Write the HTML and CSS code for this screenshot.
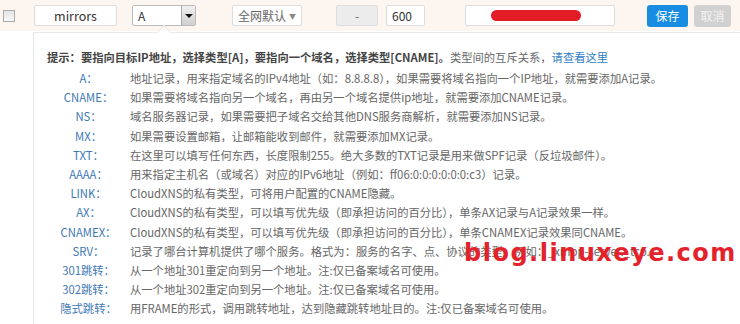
FILE: index.html
```html
<!DOCTYPE html>
<html lang="zh-CN">
<head>
  <meta charset="UTF-8" />
  <title>DNS Record</title>
  <link rel="stylesheet" href="styles.css">
</head>
<body>

<!-- record edit row -->
<div class="record-row">
  <span class="chk"></span>
  <div class="field host">mirrors</div>
  <div class="field type-select">
    <span>A</span>
    <span class="sel-arrow"></span>
  </div>
  <div class="field line-btn">全网默认 <span class="caret">▼</span></div>
  <div class="field mx">-</div>
  <div class="field ttl">600</div>
  <div class="field value"><span class="blot"></span></div>
  <button class="btn btn-save">保存</button>
  <button class="btn btn-cancel">取消</button>
</div>

<!-- type help popup -->
<div class="help-pop">
  <span class="pop-arrow"></span>
  <p class="tip"><strong>提示：要指向目标IP地址，选择类型[A]，要指向一个域名，选择类型[CNAME]。</strong>类型间的互斥关系，<a href="#">请查看这里</a></p>
  <div class="type-list">
    <span class="t">A：</span><span class="d">地址记录，用来指定域名的IPv4地址（如：8.8.8.8），如果需要将域名指向一个IP地址，就需要添加A记录。</span>
    <span class="t">CNAME：</span><span class="d">如果需要将域名指向另一个域名，再由另一个域名提供ip地址，就需要添加CNAME记录。</span>
    <span class="t">NS：</span><span class="d">域名服务器记录，如果需要把子域名交给其他DNS服务商解析，就需要添加NS记录。</span>
    <span class="t">MX：</span><span class="d">如果需要设置邮箱，让邮箱能收到邮件，就需要添加MX记录。</span>
    <span class="t">TXT：</span><span class="d">在这里可以填写任何东西，长度限制255。绝大多数的TXT记录是用来做SPF记录（反垃圾邮件）。</span>
    <span class="t">AAAA：</span><span class="d">用来指定主机名（或域名）对应的IPv6地址（例如：ff06:0:0:0:0:0:0:c3）记录。</span>
    <span class="t">LINK：</span><span class="d">CloudXNS的私有类型，可将用户配置的CNAME隐藏。</span>
    <span class="t">AX：</span><span class="d">CloudXNS的私有类型，可以填写优先级（即承担访问的百分比），单条AX记录与A记录效果一样。</span>
    <span class="t">CNAMEX：</span><span class="d">CloudXNS的私有类型，可以填写优先级（即承担访问的百分比），单条CNAMEX记录效果同CNAME。</span>
    <span class="t">SRV：</span><span class="d">记录了哪台计算机提供了哪个服务。格式为：服务的名字、点、协议的类型，例如：_xmpp-server._tcp.</span>
    <span class="t">301跳转：</span><span class="d">从一个地址301重定向到另一个地址。注:仅已备案域名可使用。</span>
    <span class="t">302跳转：</span><span class="d">从一个地址302重定向到另一个地址。注:仅已备案域名可使用。</span>
    <span class="t">隐式跳转：</span><span class="d">用FRAME的形式，调用跳转地址，达到隐藏跳转地址目的。注:仅已备案域名可使用。</span>
  </div>
</div>

<div class="watermark">blog.linuxeye.com</div>

</body>
</html>
```

FILE: styles.css
```css
body {
  margin: 0;
  background: #fff;
  font-family: "Noto Sans CJK SC", "Noto Sans", sans-serif;
  font-size: 12px;
  color: #555;
  overflow: hidden;
}
.record-row {
  display: flex;
  align-items: center;
  height: 31px;
  padding-left: 3px;
  background: #fdf6f0;
}
.chk {
  width: 10px;
  height: 10px;
  border: 1px solid #aaa;
  background: linear-gradient(#e6e6e6, #f6f6f6);
}
.field {
  box-sizing: border-box;
  height: 21px;
  border: 1px solid #ddd;
  border-radius: 2px;
  background: #fff;
  display: flex;
  align-items: center;
  color: #333;
}
.host {
  width: 83px;
  margin-left: 19px;
  justify-content: center;
  font-size: 12.5px;
}
.type-select {
  width: 64px;
  margin-left: 15px;
  padding-left: 5px;
  justify-content: space-between;
  border-color: #bbb;
}
.sel-arrow {
  position: relative;
  width: 14px;
  height: 19px;
  box-sizing: border-box;
  border-left: 1px solid #aaa;
  background: linear-gradient(#f0f0f0, #cfcfcf);
}
.sel-arrow::after {
  content: "";
  position: absolute;
  left: 3px;
  top: 8px;
  border-left: 4px solid transparent;
  border-right: 4px solid transparent;
  border-top: 4px solid #111;
}
.line-btn {
  width: 70px;
  margin-left: 36px;
  justify-content: center;
  color: #666;
}
.caret {
  font-size: 7px;
  color: #888;
  margin-left: 3px;
}
.mx {
  width: 42px;
  margin-left: 34px;
  justify-content: center;
  background: #ececec;
  color: #666;
}
.ttl {
  width: 39px;
  margin-left: 8px;
  padding-left: 5px;
}
.value {
  width: 150px;
  margin-left: 40px;
  padding-left: 25px;
}
.blot {
  width: 90px;
  height: 11px;
  border-radius: 6px;
  background: #e31d25;
}
.btn {
  height: 22px;
  border: none;
  border-radius: 3px;
  color: #fff;
  font-family: inherit;
  font-size: 12px;
  padding: 0;
}
.btn-save {
  width: 41px;
  margin-left: 32px;
  background: #168ce3;
}
.btn-cancel {
  width: 37px;
  margin-left: 6px;
  background: #d1d1d1;
  color: #f4f4f4;
}
.help-pop {
  position: relative;
  margin: 1px 0 0 33px;
  border-top: 1px solid #e8e8e8;
  border-left: 1px solid #e6e6e6;
  padding: 16px 0 20px 13px;
  height: 300px;
}
.pop-arrow {
  position: absolute;
  left: 125px;
  top: -6px;
  width: 9px;
  height: 9px;
  background: #fff;
  border-top: 1px solid #e8e8e8;
  border-left: 1px solid #e8e8e8;
  transform: rotate(45deg);
}
.tip {
  margin: 0 0 4px;
  font-size: 11.3px;
  color: #666;
  line-height: 16px;
}
.tip strong {
  color: #444;
}
.tip a {
  color: #2f7ec4;
  text-decoration: none;
}
.type-list {
  display: grid;
  grid-template-columns: 83px 1fr;
  font-size: 11.3px;
  line-height: 19.2px;
}
.type-list .t {
  text-align: center;
  color: #3d78b6;
}
.type-list .d {
  color: #666;
  white-space: nowrap;
}
.watermark {
  position: absolute;
  left: 464px;
  top: 241px;
  font-family: "DejaVu Sans", sans-serif;
  font-weight: bold;
  font-size: 24px;
  line-height: 24px;
  color: #e4222b;
  letter-spacing: 1.5px;
}
```
